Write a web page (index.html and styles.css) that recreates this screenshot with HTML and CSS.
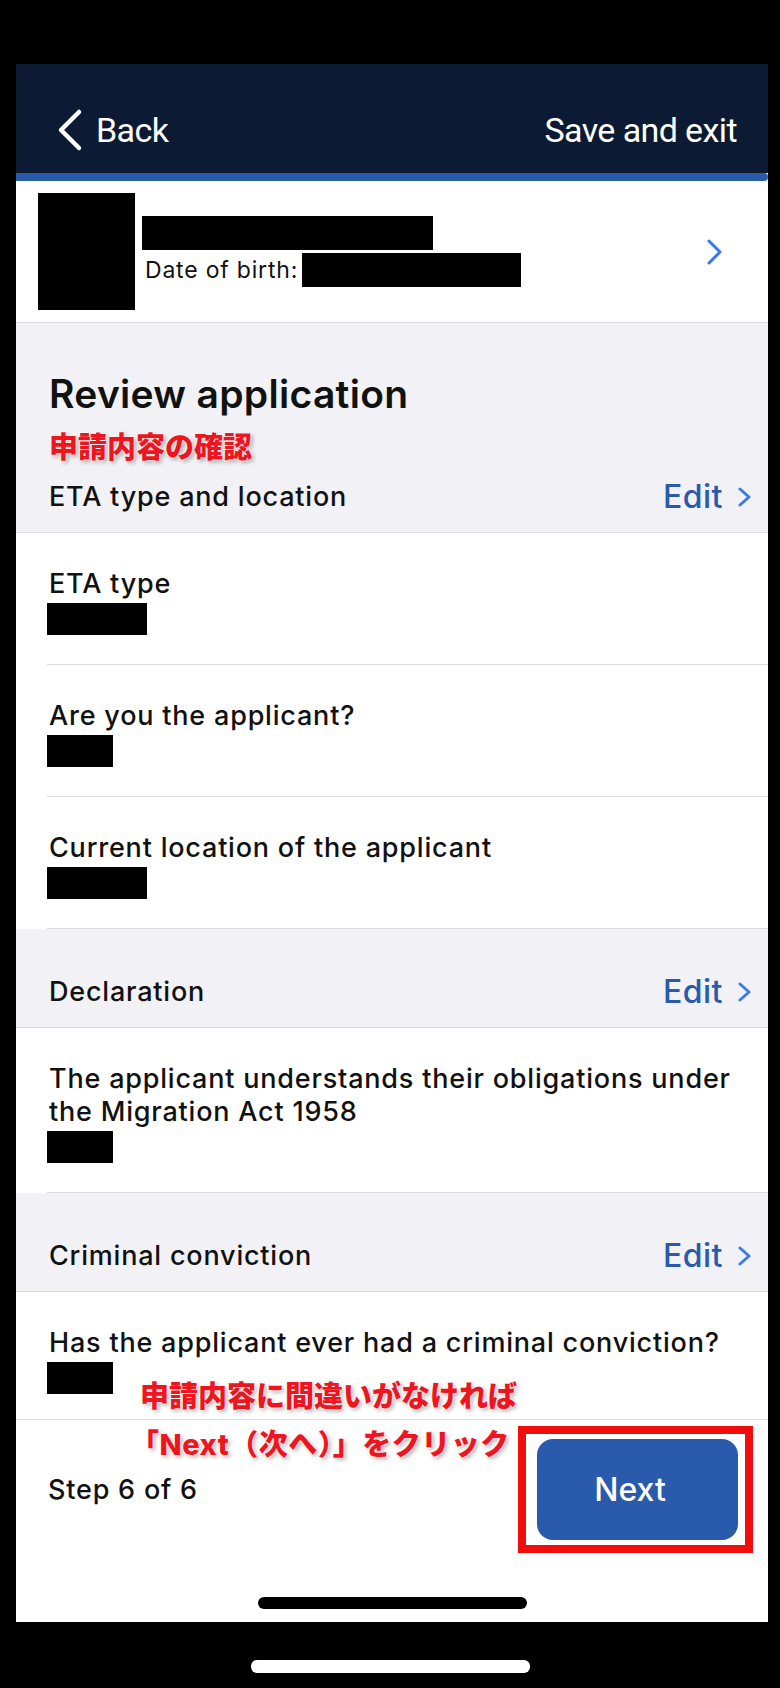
FILE: index.html
```html
<!DOCTYPE html>
<html lang="en">
<head>
    <meta charset="UTF-8">
    <meta name="viewport" content="width=device-width, initial-scale=1.0">
    <title>Review application</title>

    <link rel="stylesheet" href="styles.css">
</head>
<body>

    <div class="phone">
        <header class="topbar">
            <a class="back" href="#">
                <svg class="back-icon" width="28" height="44" viewBox="0 0 28 44">
                    <path d="M23 4 L5 22 L23 40" fill="none" stroke="#fff" stroke-width="4.5" stroke-linecap="round" stroke-linejoin="round"/>
                </svg>
                <span>Back</span>
            </a>
            <a class="save" href="#">Save and exit</a>
        </header>
        <div class="progress"></div>

        <section class="profile">
            <div class="avatar redact"></div>
            <div class="profile-info">
                <div class="name redact"></div>
                <div class="dob">
                    <span>Date of birth:</span>
                    <span class="dob-value redact"></span>
                </div>
            </div>
            <svg class="profile-chevron" width="18" height="28" viewBox="0 0 18 28">
                <path d="M3 3 L14 14 L3 25" fill="none" stroke="#3478f6" stroke-width="3" stroke-linecap="round" stroke-linejoin="round"/>
            </svg>
        </section>

        <main class="review">
            <div class="intro">
                <h1>Review application</h1>
                <p class="note">申請内容の確認</p>
            </div>

            <div class="group-head first">
                <span>ETA type and location</span>
                <a class="edit" href="#">Edit
                    <svg width="16" height="20" viewBox="0 0 16 20"><path d="M3 2 L12 10 L3 18" fill="none" stroke="#3a7be8" stroke-width="3" stroke-linecap="round" stroke-linejoin="round"/></svg>
                </a>
            </div>
            <div class="rows">
                <div class="row">
                    <div class="label">ETA type</div>
                    <div class="value redact long"></div>
                </div>
                <div class="row">
                    <div class="label">Are you the applicant?</div>
                    <div class="value redact short"></div>
                </div>
                <div class="row">
                    <div class="label">Current location of the applicant</div>
                    <div class="value redact long"></div>
                </div>
            </div>

            <div class="group-head">
                <span>Declaration</span>
                <a class="edit" href="#">Edit
                    <svg width="16" height="20" viewBox="0 0 16 20"><path d="M3 2 L12 10 L3 18" fill="none" stroke="#3a7be8" stroke-width="3" stroke-linecap="round" stroke-linejoin="round"/></svg>
                </a>
            </div>
            <div class="rows">
                <div class="row">
                    <div class="label">The applicant understands their obligations under the Migration Act 1958</div>
                    <div class="value redact short"></div>
                </div>
            </div>

            <div class="group-head">
                <span>Criminal conviction</span>
                <a class="edit" href="#">Edit
                    <svg width="16" height="20" viewBox="0 0 16 20"><path d="M3 2 L12 10 L3 18" fill="none" stroke="#3a7be8" stroke-width="3" stroke-linecap="round" stroke-linejoin="round"/></svg>
                </a>
            </div>
            <div class="rows">
                <div class="row last">
                    <div class="label">Has the applicant ever had a criminal conviction?</div>
                    <div class="value redact short"></div>
                </div>
            </div>
        </main>

        <footer class="footer">
            <div class="callout">
                <p>申請内容に間違いがなければ</p>
                <p class="callout-2">「<span class="latin">Next</span>（次へ）」をクリック</p>
            </div>
            <div class="footer-row">
                <span class="step">Step 6 of 6</span>
                <div class="highlight">
                    <button class="btn">Next</button>
                </div>
            </div>
            <div class="home-bar"></div>
        </footer>
    </div>
    <div class="home-bar light"></div>

</body>
</html>
```

FILE: styles.css
```css
body {
    margin: 0;
    background-color: #000;
    font-family: "Inter", "Noto Sans CJK JP", sans-serif;
    color: #111;
}
p, h1 {
    margin: 0;
}
a {
    color: inherit;
    text-decoration: none;
}
.phone {
    margin: 64px 12px 0 16px;
    width: 752px;
    height: 1558px;
    background: white;
    display: flex;
    flex-direction: column;
}
.topbar {
    background-color: #0c1b33;
    color: #fff;
    display: flex;
    align-items: center;
    justify-content: space-between;
    padding: 44px 31px 21px 40px;
    font-family: "Roboto", sans-serif;
    font-size: 34px;
    letter-spacing: -0.6px;
    line-height: 42px;
}
.back {
    display: flex;
    align-items: center;
    gap: 12px;
}
.progress {
    height: 8px;
    background-color: #2a5ba8;
    border-radius: 0 4px 4px 0;
}
.profile {
    display: flex;
    align-items: center;
    padding: 12px 44px 12px 22px;
    border-bottom: 1px solid #dcdce0;
}
.redact {
    background: #000;
}
.avatar {
    width: 97px;
    height: 117px;
}
.profile-info {
    margin-left: 7px;
}
.name {
    width: 291px;
    height: 34px;
}
.dob {
    display: flex;
    align-items: center;
    gap: 4px;
    margin-top: 3px;
    font-size: 23px;
    letter-spacing: 0.8px;
    padding-left: 3px;
}
.dob-value {
    width: 219px;
    height: 34px;
}
.profile-chevron {
    margin-left: auto;
}
.review {
    background-color: #f1f1f6;
}
.intro {
    padding: 47px 15px 0 33px;
}
h1 {
    font-size: 39px;
    font-weight: 600;
    line-height: 48px;
    letter-spacing: 0.3px;
}
.note {
    margin-top: 10px;
    font-family: "Noto Sans CJK JP", sans-serif;
    font-size: 29px;
    line-height: 34px;
    font-weight: 900;
    color: #ee1420;
    text-shadow: 0 0 2px #fff, 0 0 3px #fff, 2px 2px 4px rgba(0, 0, 0, 0.35);
}
.group-head {
    display: flex;
    align-items: center;
    justify-content: space-between;
    padding: 43px 15px 15px 33px;
    line-height: 40px;
    font-size: 27px;
    letter-spacing: 0.8px;
    font-weight: 500;
    border-bottom: 1px solid #dcdce0;
}
.group-head.first {
    padding-top: 15px;
}
.edit {
    display: flex;
    align-items: center;
    gap: 14px;
    color: #2b5ba8;
    font-size: 32px;
    letter-spacing: 0.5px;
}
.rows {
    background: white;
}
.row {
    margin-left: 31px;
    padding: 34px 15px 29px 0;
    border-bottom: 1px solid #dcdce0;
}
.row.last {
    border-bottom: none;
    padding-bottom: 25px;
}
.label {
    padding-left: 2px;
    font-size: 27px;
    letter-spacing: 0.8px;
    font-weight: 500;
    line-height: 33px;
}
.value {
    margin-top: 3px;
    height: 32px;
}
.long {
    width: 100px;
}
.short {
    width: 66px;
}
.footer {
    position: relative;
    flex: 1;
    border-top: 1px solid #dcdce0;
    display: flex;
    flex-direction: column;
}
.callout {
    position: absolute;
    left: 124px;
    top: -50px;
    font-family: "Noto Sans CJK JP", sans-serif;
    font-size: 29px;
    line-height: 48px;
    font-weight: 900;
    color: #ee1420;
    text-shadow: 0 0 2px #fff, 0 0 3px #fff, 2px 2px 4px rgba(0, 0, 0, 0.35);
}
.callout-2 {
    text-indent: -10px;
    letter-spacing: 0.5px;
}
.latin {
    font-family: "Inter", sans-serif;
    font-weight: 800;
}
.footer-row {
    display: flex;
    align-items: center;
    justify-content: space-between;
    padding: 6px 15px 0 32px;
}
.step {
    font-size: 27px;
    letter-spacing: 0.8px;
    font-weight: 500;
}
.highlight {
    border: 8px solid #f20d0d;
    padding: 5px 7px 5px 11px;
    background: white;
}
.btn {
    display: block;
    width: 201px;
    height: 101px;
    padding: 0 15px 0 0;
    border: none;
    border-radius: 16px;
    background-color: #2a5aab;
    color: white;
    font-family: "Inter", sans-serif;
    font-size: 32px;
    font-weight: 500;
    cursor: pointer;
}
.home-bar {
    width: 269px;
    height: 12px;
    border-radius: 6px;
    background: #000;
    margin: 44px auto 0;
}
.home-bar.light {
    width: 279px;
    height: 13px;
    background: #fff;
    margin: 38px auto 0;
}
```
